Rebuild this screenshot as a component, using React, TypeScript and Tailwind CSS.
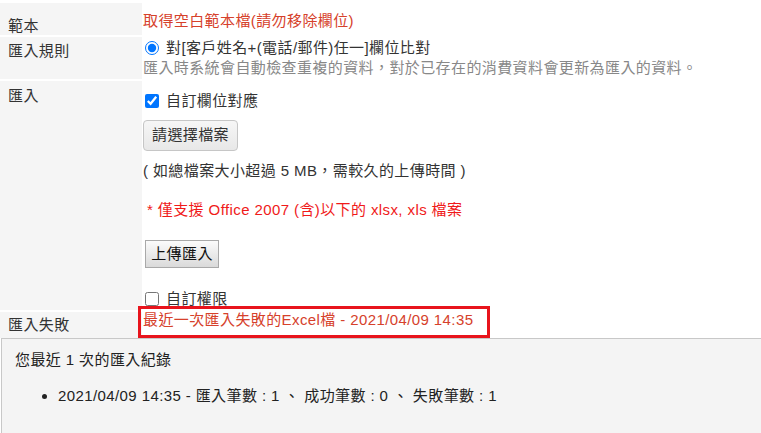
const font = { fontFamily: '"Liberation Sans", "Noto Sans CJK TC", sans-serif' };

const Label = ({ text, pad }: { text: string; pad: string }) => (
  <div className={`w-[142px] shrink-0 bg-[#f5f5f5] pl-[8px] leading-[20px] text-[#333] ${pad}`}>
    {text}
  </div>
);

export default function App() {
  return (
    <div className="relative min-h-[433px] overflow-hidden bg-white text-[15px] tracking-[0.4px]" style={font}>
      <div className="flex flex-col gap-[2px] pt-[3px]">
        {/* 範本 */}
        <div className="flex h-[32px]">
          <Label text="範本" pad="pt-[13px]" />
          <div className="pl-[1px] pt-[8px] leading-[20px]">
            <a className="text-[#d6412b]">取得空白範本檔(請勿移除欄位)</a>
          </div>
        </div>

        {/* 匯入規則 */}
        <div className="flex h-[42px]">
          <Label text="匯入規則" pad="pt-[4px]" />
          <div className="pl-[1px] pt-[1px]">
            <label className="flex h-[20px] items-center gap-[7px] pl-[2px] text-[#333]">
              <input type="radio" defaultChecked className="m-0 h-[14px] w-[14px] accent-[#0075ff]" />
              對[客戶姓名+(電話/郵件)任一]欄位比對
            </label>
            <div className="leading-[20px] text-[#888]">
              匯入時系統會自動檢查重複的資料，對於已存在的消費資料會更新為匯入的資料。
            </div>
          </div>
        </div>

        {/* 匯入 */}
        <div className="flex h-[229px]">
          <Label text="匯入" pad="pt-[5px]" />
          <div className="flex flex-col items-start pl-[1px] pt-[10px] text-[#333]">
            <label className="flex h-[20px] items-center gap-[7px] pl-[2px]">
              <input type="checkbox" defaultChecked className="m-0 h-[14px] w-[14px] accent-[#0075ff]" />
              自訂欄位對應
            </label>
            <button className="mt-[9px] h-[31px] w-[95px] rounded-[4px] border border-[#c6c6c6] bg-gradient-to-b from-[#f6f6f6] to-[#e8e8e8] text-[#333]">
              請選擇檔案
            </button>
            <div className="mt-[10px] leading-[20px]">( 如總檔案大小超過 5 MB，需較久的上傳時間 )</div>
            <div className="mt-[19px] pl-[4px] leading-[20px] text-[#f01a1a]">
              * 僅支援 Office 2007 (含)以下的 xlsx, xls 檔案
            </div>
            <button className="ml-[2px] mt-[20px] h-[28px] w-[74px] border border-[#a9a9a9] bg-gradient-to-b from-[#fbfbfb] to-[#dadada] text-[#111]">
              上傳匯入
            </button>
            <label className="mt-[21px] flex h-[20px] items-center gap-[7px] pl-[2px]">
              <input type="checkbox" className="m-0 h-[14px] w-[14px]" />
              自訂權限
            </label>
          </div>
        </div>

        {/* 匯入失敗 */}
        <div className="flex h-[26px]">
          <Label text="匯入失敗" pad="pt-[3px]" />
          <div className="pl-[1px] leading-[16px]">
            <a className="text-[#d6412b]">最近一次匯入失敗的Excel檔 - 2021/04/09 14:35</a>
          </div>
        </div>
      </div>

      {/* 紀錄 */}
      <div className="ml-[1px] h-[100px] border-l border-t border-[#c8c8c8] bg-[#f4f4f4] pl-[13px] pt-[11px] text-[#222]">
        <div className="leading-[20px]">您最近 1 次的匯入紀錄</div>
        <ul className="mt-[16px] list-disc pl-[43px] leading-[20px]">
          <li>2021/04/09 14:35 - 匯入筆數 : 1 、 成功筆數 : 0 、 失敗筆數 : 1</li>
        </ul>
      </div>

      {/* annotation */}
      <div className="absolute left-[138px] top-[306px] h-[32px] w-[352px] border-[3px] border-[#e8141c]" />
    </div>
  );
}
